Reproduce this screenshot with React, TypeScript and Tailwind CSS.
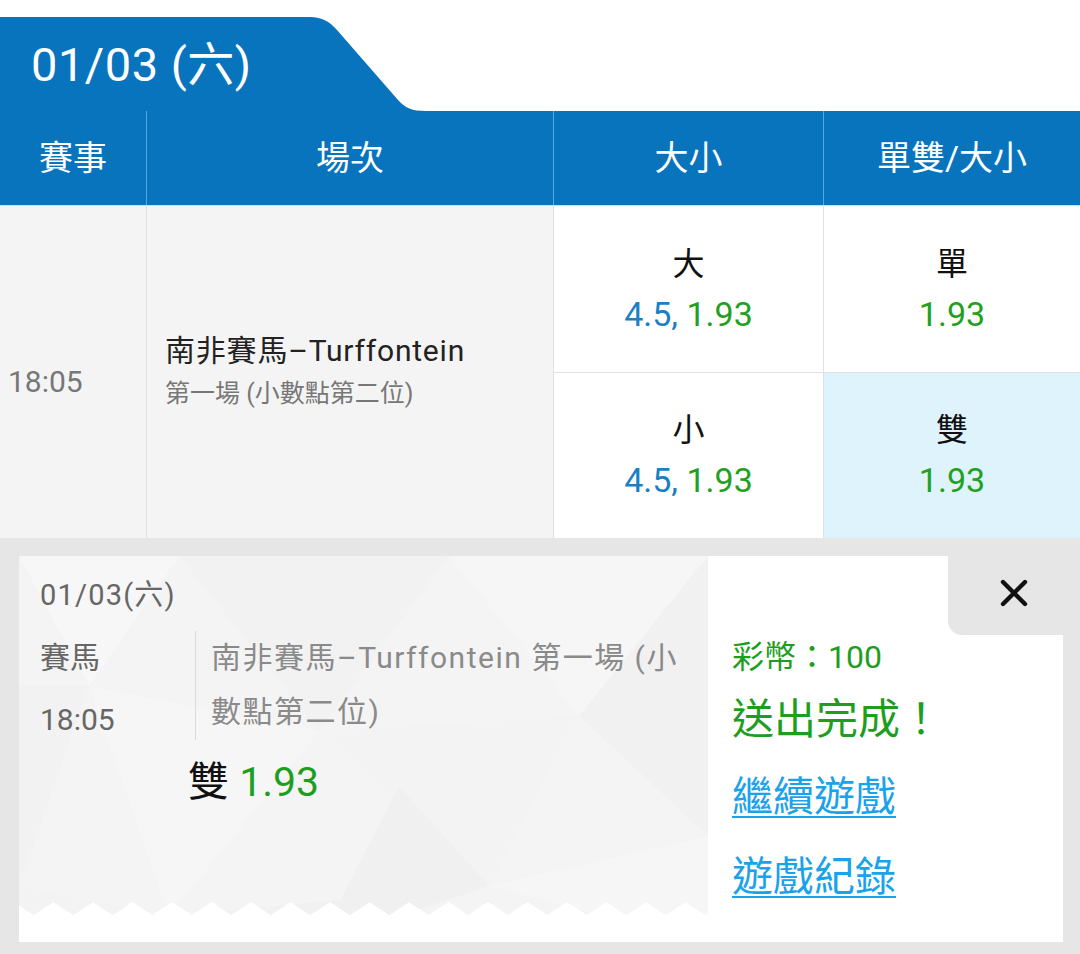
import React from "react";

function TicketPattern() {
  const zig: string[] = [];
  for (let k = 0; k < 40; k++) {
    const x = -5 + 19.75 * k;
    const y = k % 2 === 0 ? 346 : 359;
    zig.push(`${x.toFixed(2)},${y}`);
    if (x > 700) break;
  }
  const clip = `0,0 ${zig.join(" ")} 689,0`;
  const tris: [string, string][] = [
    ["0,0 160,0 70,130", "#f7f7f7"],
    ["160,0 430,0 300,175", "#f2f2f2"],
    ["430,0 689,0 560,160", "#f6f6f6"],
    ["0,130 70,130 0,330", "#f2f2f2"],
    ["70,130 300,175 150,360", "#f6f6f6"],
    ["300,175 560,160 470,330", "#f3f3f3"],
    ["560,160 689,0 689,280", "#f1f1f1"],
    ["0,330 150,360 0,386", "#f3f3f3"],
    ["150,360 470,330 300,386", "#f1f1f1"],
    ["470,330 689,280 689,386", "#f6f6f6"],
    ["380,230 470,330 300,386", "#f0f0f0"],
  ];
  return (
    <svg
      className="absolute inset-0"
      width="689"
      height="386"
      viewBox="0 0 689 386"
    >
      <defs>
        <clipPath id="zz">
          <polygon points={clip} />
        </clipPath>
      </defs>
      <rect x="0" y="0" width="689" height="386" fill="#ffffff" />
      <g clipPath="url(#zz)">
        <rect x="0" y="0" width="689" height="386" fill="#f4f4f4" />
        {tris.map(([p, f], i) => (
          <polygon key={i} points={p} fill={f} />
        ))}
      </g>
    </svg>
  );
}

export default function App() {
  return (
    <div className="w-[1080px] h-[954px] overflow-hidden bg-white flex flex-col font-['Roboto','Noto_Sans_CJK_TC',sans-serif]">
      {/* date tab */}
      <div className="relative h-[111px] flex items-end shrink-0">
        <svg
          className="absolute inset-0"
          width="1080"
          height="111"
          viewBox="0 0 1080 111"
        >
          <path
            d="M0 111 V17 H310 C322 17 330 22 337 30 L398 100 C405 108 412 111 426 111 Z"
            fill="#0874be"
          />
        </svg>
        <div className="relative h-[94px] flex items-center pl-[31px] text-white text-[47px] leading-none tracking-[0.5px]">
          01/03 (六)
        </div>
      </div>

      {/* header row */}
      <div className="flex h-[94px] shrink-0 bg-[#0874be] text-white text-[34px] leading-none">
        <div className="w-[146px] flex items-center justify-center">賽事</div>
        <div className="w-[407px] flex items-center justify-center border-l border-[#5aa7dc]">
          場次
        </div>
        <div className="w-[270px] flex items-center justify-center border-l border-[#5aa7dc]">
          大小
        </div>
        <div className="flex-1 flex items-center justify-center border-l border-[#5aa7dc]">
          單雙/大小
        </div>
      </div>

      {/* match row */}
      <div className="flex h-[333px] shrink-0 border-t border-[#dcdcdc]">
        <div className="w-[146px] bg-[#f4f4f4] flex items-center pl-[8px] pt-[18px] text-[30px] text-[#777]">
          18:05
        </div>
        <div className="w-[407px] bg-[#f4f4f4] border-l border-[#e2e2e2] flex flex-col justify-center pl-[18px]">
          <div className="text-[30px] leading-[44px] text-[#222] tracking-[0.8px]">
            南非賽馬–Turffontein
          </div>
          <div className="text-[25px] leading-[42px] text-[#777]">
            第一場 (小數點第二位)
          </div>
        </div>
        <div className="w-[270px] flex flex-col border-l border-[#e0e0e0] bg-white">
          <div className="flex-1 flex flex-col items-center justify-center border-b border-[#e0e0e0]">
            <div className="text-[32px] leading-[50px] text-[#111]">大</div>
            <div className="text-[34px] leading-[50px]">
              <span className="text-[#1b7fc4]">4.5, </span>
              <span className="text-[#22a022]">1.93</span>
            </div>
          </div>
          <div className="flex-1 flex flex-col items-center justify-center">
            <div className="text-[32px] leading-[50px] text-[#111]">小</div>
            <div className="text-[34px] leading-[50px]">
              <span className="text-[#1b7fc4]">4.5, </span>
              <span className="text-[#22a022]">1.93</span>
            </div>
          </div>
        </div>
        <div className="flex-1 flex flex-col border-l border-[#e0e0e0]">
          <div className="flex-1 flex flex-col items-center justify-center border-b border-[#e0e0e0] bg-white">
            <div className="text-[32px] leading-[50px] text-[#111]">單</div>
            <div className="text-[34px] leading-[50px] text-[#22a022]">1.93</div>
          </div>
          <div className="flex-1 flex flex-col items-center justify-center bg-[#dff3fc]">
            <div className="text-[32px] leading-[50px] text-[#111]">雙</div>
            <div className="text-[34px] leading-[50px] text-[#22a022]">1.93</div>
          </div>
        </div>
      </div>

      {/* bet slip */}
      <div className="flex-1 bg-[#e6e6e6] pt-[18px] pl-[19px] pr-[17px] pb-[12px]">
        <div className="flex h-full">
          <div className="relative w-[689px] h-full">
            <TicketPattern />
            <div className="relative pt-[21px] pl-[21px]">
              <div className="text-[29px] leading-[36px] text-[#666] tracking-[1.2px]">
                01/03(六)
              </div>
              <div className="flex mt-[18px]">
                <div className="w-[155px] text-[30px] text-[#666]">
                  <div className="leading-[54px]">賽馬</div>
                  <div className="leading-[40px] mt-[15px]">18:05</div>
                </div>
                <div className="border-l border-[#dadada] pl-[15px] text-[30px] leading-[54px] text-[#8a8a8a] tracking-[1.5px]">
                  <div className="whitespace-nowrap">南非賽馬–Turffontein 第一場 (小</div>
                  <div className="whitespace-nowrap">數點第二位)</div>
                </div>
              </div>
              <div className="pl-[148px] mt-[18px] text-[41px] leading-[48px]">
                <span className="text-[#111]">雙 </span>
                <span className="text-[#1e9e1e]">1.93</span>
              </div>
            </div>
          </div>

          <div className="relative flex-1 bg-white flex flex-col pl-[24px]">
            <div className="absolute top-0 right-0 w-[115px] h-[79px] bg-[#e6e6e6] rounded-bl-[14px] flex items-center justify-center pl-[17px] pb-[5px]">
              <svg width="28" height="28" viewBox="0 0 28 28">
                <path
                  d="M3 3 L25 25 M25 3 L3 25"
                  stroke="#111"
                  strokeWidth="4.4"
                  strokeLinecap="round"
                />
              </svg>
            </div>
            <div className="mt-[85px] text-[32px] leading-[32px] text-[#1e9e1e]">
              彩幣：100
            </div>
            <div className="mt-[26px] text-[42px] leading-[42px] text-[#1e9e1e]">
              送出完成！
            </div>
            <div className="mt-[36px] text-[41px] leading-[41px] text-[#1aa2ea] underline decoration-2 underline-offset-[5px]">
              繼續遊戲
            </div>
            <div className="mt-[39px] text-[41px] leading-[41px] text-[#1aa2ea] underline decoration-2 underline-offset-[5px]">
              遊戲紀錄
            </div>
          </div>
        </div>
      </div>
    </div>
  );
}
